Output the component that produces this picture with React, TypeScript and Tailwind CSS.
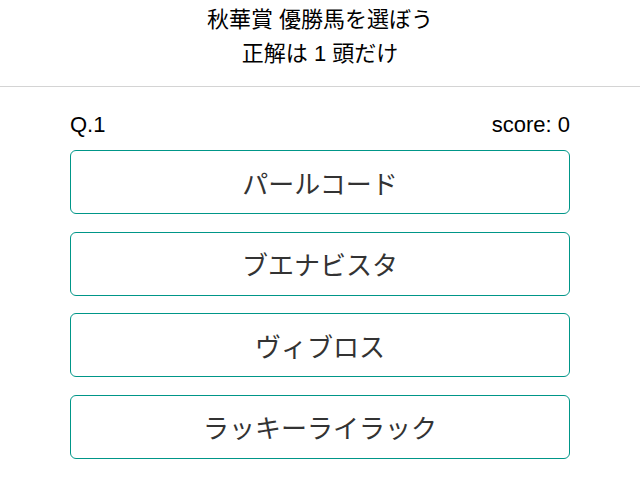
const CHOICES: string[] = ["パールコード", "ブエナビスタ", "ヴィブロス", "ラッキーライラック"];

export default function App() {
  return (
    <div className="min-h-screen bg-white font-['Liberation_Sans','Noto_Sans_CJK_JP',sans-serif] text-black">
      <header className="border-b border-[#d4d4d4] pt-[3px] pb-[15px] text-center text-[22px] leading-[34px]">
        <div>秋華賞 優勝馬を選ぼう</div>
        <div>正解は 1 頭だけ</div>
      </header>

      <main className="mx-auto w-[500px]">
        <div className="mt-[26px] mb-[13px] flex items-center justify-between text-[22px] leading-6">
          <span>Q.1</span>
          <span>score: 0</span>
        </div>

        <div className="flex flex-col gap-[17.67px]">
          {CHOICES.map((name) => (
            <button
              key={name}
              type="button"
              className="h-16 w-full rounded-md border border-[#009688] bg-white pt-[6px] text-[26px] text-[#333]"
            >
              {name}
            </button>
          ))}
        </div>
      </main>
    </div>
  );
}
